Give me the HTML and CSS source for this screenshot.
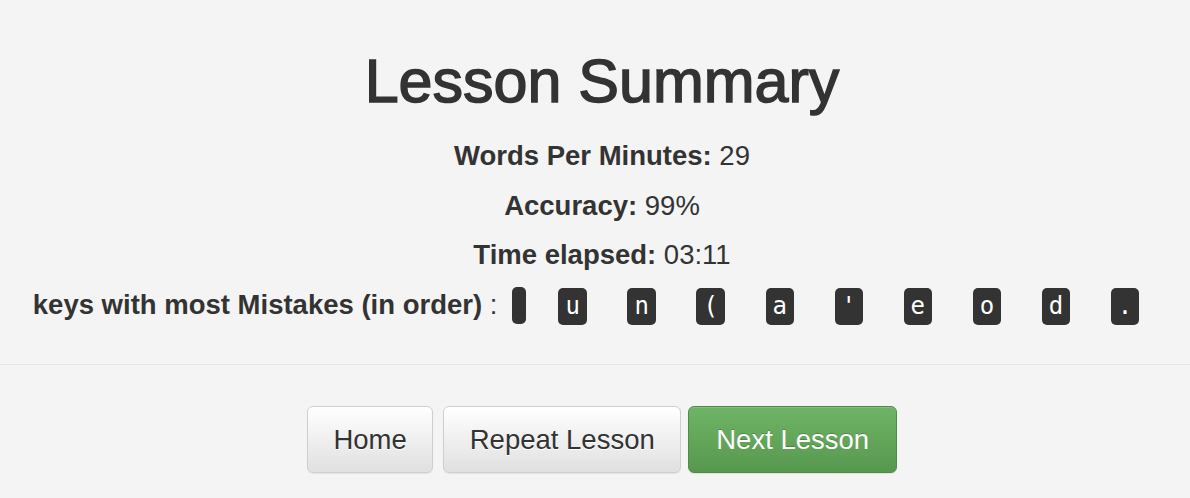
FILE: index.html
```html
<!DOCTYPE html>
<html lang="en">
<head>
<meta charset="utf-8">
<title>Lesson Summary</title>
<link rel="stylesheet" href="styles.css">
</head>
<body>
<div class="summary">
  <h1 class="title">Lesson Summary</h1>
  <div class="stats">
    <p class="stat"><strong>Words Per Minutes:</strong> 29</p>
    <p class="stat"><strong>Accuracy:</strong> 99%</p>
    <p class="stat"><strong>Time elapsed:</strong> 03:11</p>
    <p class="stat stat-keys"><strong>keys with most Mistakes (in order)</strong> :<kbd class="key key-first"></kbd><kbd class="key key-second">u</kbd><kbd class="key">n</kbd><kbd class="key">(</kbd><kbd class="key">a</kbd><kbd class="key">'</kbd><kbd class="key">e</kbd><kbd class="key">o</kbd><kbd class="key">d</kbd><kbd class="key">.</kbd></p>
  </div>
</div>
<div class="footer">
  <button class="btn btn-default">Home</button>
  <button class="btn btn-default btn-repeat">Repeat Lesson</button>
  <button class="btn btn-success btn-next">Next Lesson</button>
</div>
</body>
</html>
```

FILE: styles.css
```css
html, body {
  margin: 0;
  padding: 0;
  background: #f4f4f4;
}

body {
  font-family: "Liberation Sans", Arial, Helvetica, sans-serif;
  color: #333;
  width: 1190px;
  height: 498px;
  overflow: hidden;
}

.summary {
  padding: 48px 0 0 14px;
  text-align: center;
}

.title {
  margin: 0;
  font-size: 61px;
  line-height: 67px;
  font-weight: normal;
  color: #333;
  -webkit-text-stroke: 1.5px #333;
}

.stats {
  margin-top: 16px;
}

.stat {
  margin: 0;
  font-size: 27.5px;
  line-height: 49.5px;
  white-space: nowrap;
}

.stat strong {
  font-weight: bold;
}

.stat-keys {
  padding-right: 32px;
}

.key {
  display: inline-block;
  font-family: "DejaVu Sans Mono", "Liberation Mono", monospace;
  font-size: 24px;
  line-height: 29px;
  padding: 4px 7px;
  background: #333;
  color: #fff;
  border-radius: 5px;
  margin-left: 40.6px;
  vertical-align: baseline;
}

.key-first {
  margin-left: 15px;
  width: 0;
  height: 29px;
  vertical-align: -10px;
}

.key-second {
  margin-left: 32px;
}

.footer {
  margin-top: 35px;
  border-top: 1px solid #e6e6e6;
  padding: 41px 0 0 14px;
  display: flex;
  justify-content: center;
}

.btn {
  font-family: "Liberation Sans", Arial, Helvetica, sans-serif;
  font-size: 27.5px;
  line-height: 39px;
  padding: 13px 25.5px;
  border-radius: 6px;
  border: 1px solid #ccc;
  cursor: pointer;
  box-shadow: inset 0 1px 0 rgba(255, 255, 255, 0.15), 0 1px 1px rgba(0, 0, 0, 0.075);
}

.btn-default {
  color: #333;
  background: linear-gradient(to bottom, #ffffff 0%, #e0e0e0 100%);
  border-color: #cfcfcf;
  text-shadow: 0 1px 0 #fff;
}

.btn-repeat {
  margin-left: 10px;
}

.btn-success {
  color: #fff;
  background: linear-gradient(to bottom, #6fb466 0%, #57984e 100%);
  border-color: #4f8c48;
  text-shadow: 0 -1px 0 rgba(0, 0, 0, 0.2);
  padding: 13px 27px;
}

.btn-next {
  margin-left: 7px;
}
```
